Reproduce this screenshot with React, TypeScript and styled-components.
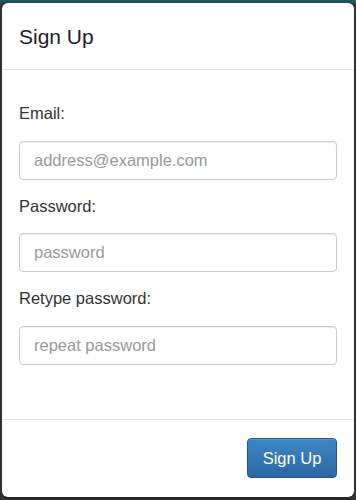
import styled, { createGlobalStyle } from 'styled-components';

const GlobalStyle = createGlobalStyle`
  html, body {
    margin: 0;
    padding: 0;
  }

  body {
    font-family: "Liberation Sans", Arial, sans-serif;
    background: linear-gradient(#1f5a62 0 3px, #3b3b3b 3px);
  }
`;

const Backdrop = styled.div`
  width: 356px;
  height: 500px;
  box-sizing: border-box;
  padding: 3px 2px 3px 2px;
`;

const Dialog = styled.div`
  display: flex;
  flex-direction: column;
  height: 494px;
  background: #fff;
  border-radius: 6px;
  box-shadow: 0 3px 9px rgba(0, 0, 0, 0.5);
  overflow: hidden;
`;

const Header = styled.div`
  padding: 19px 17px 17px 17px;
  border-bottom: 1px solid #e5e5e5;
`;

const Title = styled.h4`
  margin: 0;
  font-size: 21px;
  font-weight: normal;
  line-height: 30px;
  color: #1e1e1e;
`;

const Body = styled.div`
  flex: 1;
  padding: 32px 17px 0 17px;
`;

const Group = styled.div`
  margin-bottom: 15px;
`;

const Label = styled.label`
  display: block;
  margin-bottom: 15px;
  font-size: 16.5px;
  line-height: 23.5px;
  color: #333;
`;

const Input = styled.input`
  display: block;
  width: 100%;
  height: 39px;
  box-sizing: border-box;
  padding: 6px 14px;
  border: 1px solid #ccc;
  border-radius: 4px;
  font-family: inherit;
  font-size: 16.5px;
  color: #555;
  box-shadow: inset 0 1px 1px rgba(0, 0, 0, 0.075);

  &::placeholder {
    color: #999;
  }
`;

const Footer = styled.div`
  display: flex;
  justify-content: flex-end;
  padding: 18px 17px 19px 17px;
  border-top: 1px solid #e5e5e5;
`;

const PrimaryButton = styled.button`
  width: 90px;
  height: 40px;
  box-sizing: border-box;
  border: 1px solid #245580;
  border-radius: 4px;
  background: linear-gradient(#3f87c7, #2b67a3);
  color: #fff;
  font-family: inherit;
  font-size: 16.5px;
  cursor: pointer;
  box-shadow: inset 0 1px 0 rgba(255, 255, 255, 0.15);
`;

const fields = [
  { id: 'email', label: 'Email:', type: 'email', placeholder: 'address@example.com' },
  { id: 'password', label: 'Password:', type: 'password', placeholder: 'password' },
  { id: 'repeat', label: 'Retype password:', type: 'password', placeholder: 'repeat password' },
];

const App: React.FC = () => {
  return (
    <>
      <GlobalStyle />
      <Backdrop>
        <Dialog>
          <Header>
            <Title>Sign Up</Title>
          </Header>
          <Body>
            {fields.map((f) => (
              <Group key={f.id}>
                <Label htmlFor={f.id}>{f.label}</Label>
                <Input id={f.id} type={f.type} placeholder={f.placeholder} />
              </Group>
            ))}
          </Body>
          <Footer>
            <PrimaryButton>Sign Up</PrimaryButton>
          </Footer>
        </Dialog>
      </Backdrop>
    </>
  );
};

export default App;
